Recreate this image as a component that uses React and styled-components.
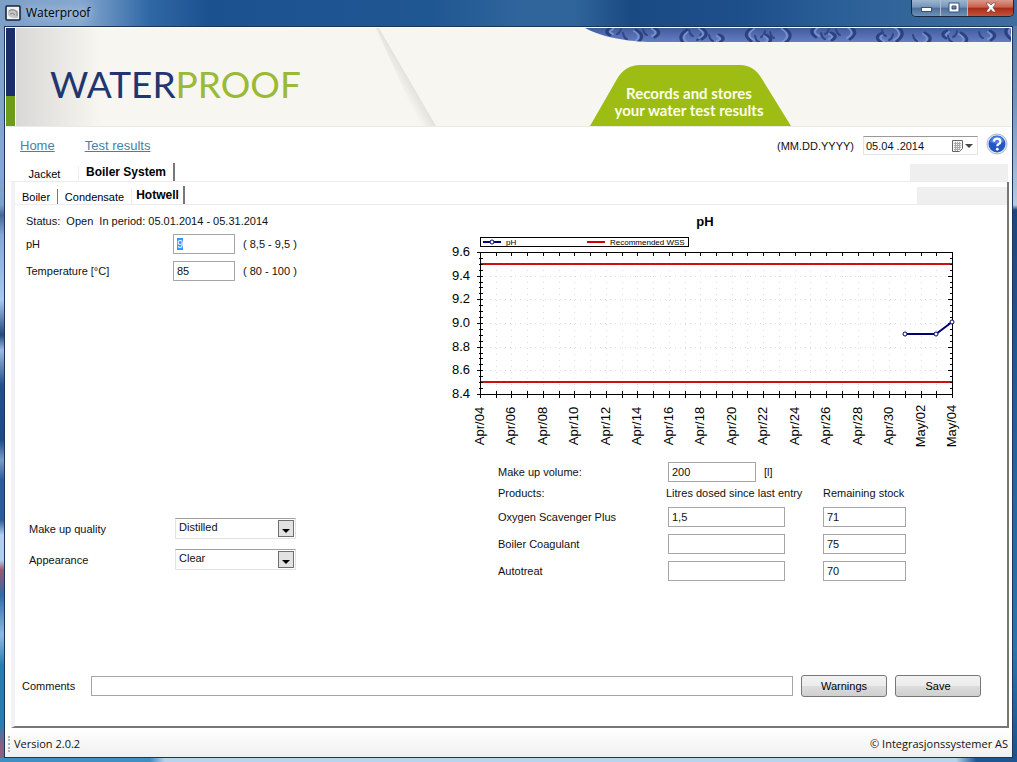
import React, { useEffect, useRef } from 'react';
import styled, { createGlobalStyle } from 'styled-components';

const DAYS = 30;
const PLOT = { left: 36, right: 508, top: 43, bottom: 185 };

const dayX = (day) => PLOT.left + Math.round((day * (PLOT.right - PLOT.left)) / DAYS);
const valueY = (value) => PLOT.bottom - Math.round(((value - 8.4) * (PLOT.bottom - PLOT.top)) / 1.2);

const days = Array.from({ length: DAYS + 1 }, (_, i) => i);
const minorTicks = Array.from({ length: 25 }, (_, i) => 8.4 + i * 0.05);
const majorTicks = [8.4, 8.6, 8.8, 9.0, 9.2, 9.4, 9.6];

const dateLabel = (day) => {
    const date = day + 4;
    return date > 30 ? `May/0${date - 30}` : `Apr/${String(date).padStart(2, '0')}`;
};

const readings = [
    { day: 27, value: 8.9 },
    { day: 29, value: 8.9 },
    { day: 30, value: 9.0 },
];

const products = [
    { name: 'Oxygen Scavenger Plus', dosed: '1,5', stock: '71' },
    { name: 'Boiler Coagulant', dosed: '', stock: '75' },
    { name: 'Autotreat', dosed: '', stock: '70' },
];

const drops = Array.from({ length: 19 }, (_, i) => ({
    x: 24 + i * 22 + ((i * 7) % 11),
    y: 3 + ((i * 5) % 9),
    r: 3 + ((i * 3) % 5),
    flip: (i * i) % 3 === 1 ? -1 : 1,
}));

const Chart = () => (
    <ChartSvg width="520" height="240" viewBox="1 0 520 240" role="img" aria-label="pH">
        <text x="261" y="17" fontSize="13" fontWeight="bold" textAnchor="middle">pH</text>

        <rect x="36.5" y="28.5" width="208" height="9" fill="#fff" stroke="#000" />
        <path d="M39 33H57" stroke="#000070" strokeWidth="2" />
        <circle cx="48" cy="33" r="2" fill="#fff" stroke="#000070" />
        <text x="62" y="36" fontSize="8">pH</text>
        <path d="M143 33H161" stroke="#d00000" strokeWidth="2" />
        <text x="166" y="36" fontSize="8">Recommended WSS</text>

        {days.slice(1, -1).map(d => (
            <path key={d} d={`M${dayX(d) + 0.5} ${PLOT.top}V${PLOT.bottom}`} stroke="#dcdcdc" strokeDasharray="1 5" />
        ))}
        {majorTicks.slice(1, -1).map(v => (
            <path key={v} d={`M${PLOT.left} ${valueY(v) + 0.5}H${PLOT.right}`} stroke="#dcdcdc" strokeDasharray="1 4" />
        ))}

        {[9.5, 8.5].map(v => (
            <path key={v} d={`M${PLOT.left} ${valueY(v)}H${PLOT.right}`} stroke="#cc1010" strokeWidth="2" />
        ))}

        <rect
            x={PLOT.left + 0.5}
            y={PLOT.top + 0.5}
            width={PLOT.right - PLOT.left}
            height={PLOT.bottom - PLOT.top}
            fill="none"
            stroke="#000"
        />
        {minorTicks.map(v => (
            <path key={v} d={`M${PLOT.left - 1} ${valueY(v) + 0.5}h4M${PLOT.right - 2} ${valueY(v) + 0.5}h3`} stroke="#000" />
        ))}
        {majorTicks.map(v => (
            <g key={v}>
                <path d={`M${PLOT.left - 3} ${valueY(v) + 0.5}h6M${PLOT.right - 4} ${valueY(v) + 0.5}h4`} stroke="#000" />
                <text x="26" y={valueY(v) + 4} fontSize="13" textAnchor="end">{v.toFixed(1)}</text>
            </g>
        ))}
        {days.map(d => (
            <path key={d} d={`M${dayX(d) + 0.5} ${PLOT.top}v4M${dayX(d) + 0.5} ${PLOT.bottom - 3}v7`} stroke="#000" />
        ))}
        {days.filter(d => d % 2 === 0).map(d => (
            <text key={d} transform={`translate(${dayX(d) + 4} 217) rotate(-90)`} fontSize="13" textAnchor="middle">
                {dateLabel(d)}
            </text>
        ))}

        <polyline
            points={readings.map(r => `${dayX(r.day)},${valueY(r.value) - 1}`).join(' ')}
            fill="none"
            stroke="#000070"
            strokeWidth="2"
        />
        {readings.map(r => (
            <circle key={r.day} cx={dayX(r.day)} cy={valueY(r.value) - 1} r="2" fill="#fff" stroke="#000070" />
        ))}
    </ChartSvg>
);

const Select = ({ id, value }) => (
    <SelectBox>
        <select id={id} defaultValue={value}>
            <option>{value}</option>
        </select>
        <svg width="16" height="17" viewBox="0 0 16 17" aria-hidden="true">
            <rect x="0.5" y="0.5" width="15" height="16" fill="#e2e2e2" stroke="#707070" />
            <path d="M4 9H12L8 13Z" fill="#000" />
        </svg>
    </SelectBox>
);

const Banner = () => (
    <BannerBox>
        <Stripe />
        <Logo>WATER<span>PROOF</span></Logo>
        <svg width="60" height="98" viewBox="0 0 60 98" aria-hidden="true">
            <defs>
                <linearGradient id="fold" gradientUnits="userSpaceOnUse" x1="21" y1="55" x2="31.5" y2="49">
                    <stop offset="0" stopColor="#f8f6f0" />
                    <stop offset="1" stopColor="#e4e2dc" />
                </linearGradient>
            </defs>
            <path d="M0 0H3L60 98H44Z" fill="url(#fold)" />
        </svg>
        <BannerRight>
            <Water viewBox="0 0 428 15" preserveAspectRatio="xMinYMin slice" aria-hidden="true">
                <defs>
                    <clipPath id="wave"><path d="M0 0H428V14H62Q22 12 0 0Z" /></clipPath>
                    <linearGradient id="sea" x1="0" y1="0" x2="0" y2="1">
                        <stop offset="0" stopColor="#425b9f" />
                        <stop offset="1" stopColor="#6681c4" />
                    </linearGradient>
                </defs>
                <g clipPath="url(#wave)">
                    <rect width="428" height="15" fill="url(#sea)" />
                    {drops.map(({ x, y, r, flip }) => (
                        <g key={x} fill="none" strokeLinecap="round" transform={`translate(${x} ${y}) scale(${flip} 1)`}>
                            <path d={`M2 ${-r}Q${-r - 3} 0 1 ${r + 1}`} stroke="#263a76" strokeWidth="3" opacity="0.85" />
                            <path d={`M4 ${-r + 1}Q${-r + 1} 1 4 ${r}`} stroke="#8199d4" strokeWidth="2" opacity="0.8" />
                            <path d={`M${r + 5} 3Q${r + 8} 2 ${r + 9} -3`} stroke="#304686" strokeWidth="2" />
                        </g>
                    ))}
                </g>
            </Water>
            <Slogan width="201" height="61" viewBox="0 0 201 61">
                <path d="M0 61L27 14Q35 0 50 0H150Q164 0 172 14L201 61Z" fill="#9dbd14" />
                <text x="99" y="34" textAnchor="middle">Records and stores</text>
                <text x="99" y="51" textAnchor="middle">your water test results</text>
            </Slogan>
        </BannerRight>
    </BannerBox>
);

const App = () => {
    const phInput = useRef(null);

    useEffect(() => {
        phInput.current.focus();
        phInput.current.select();
    }, []);

    return (
        <Desktop>
            <GlobalStyle />
            <TitleBar>
                <svg width="16" height="16" viewBox="0 0 16 16" aria-hidden="true">
                    <rect x="1" y="1" width="14" height="14" rx="1" fill="#f4f4f4" stroke="#17243c" strokeWidth="1.6" />
                    <path d="M3 6Q5 3 9 4L13 6V13H10Q5 13 3 10Z" fill="#c4c4c4" />
                    <path d="M4 6Q8 3 12 7V11M5 9Q8 7 10 10" fill="none" stroke="#858585" />
                </svg>
                <WindowTitle>Waterproof</WindowTitle>
                <WindowButtons>
                    <WindowButton aria-label="Minimize" $width={28}>
                        <svg width="12" height="12" viewBox="0 0 12 12">
                            <rect x="1.5" y="5.5" width="10" height="4" fill="#fff" stroke="#3a5377" />
                        </svg>
                    </WindowButton>
                    <WindowButton aria-label="Maximize" $width={27}>
                        <svg width="12" height="12" viewBox="0 0 12 12">
                            <path d="M1 1H11V10H1ZM4 4V7H8V4Z" fill="#fff" fillRule="evenodd" stroke="#3a5377" />
                        </svg>
                    </WindowButton>
                    <WindowButton aria-label="Close" $width={46} $close>
                        <svg width="12" height="12" viewBox="0 0 12 12">
                            <path d="M1 1H4L6 3L8 1H11L8 5.5L11 10H8L6 7.5L4 10H1L4 5.5Z" fill="#fff" stroke="#6d3030" strokeWidth="0.6" />
                        </svg>
                    </WindowButton>
                </WindowButtons>
            </TitleBar>

            <Client>
                <Banner />

                <NavRow>
                    <NavLink href="#home">Home</NavLink>
                    <NavLink href="#results">Test results</NavLink>
                    <DateLabel htmlFor="date">(MM.DD.YYYY)</DateLabel>
                    <DateBox>
                        <input id="date" defaultValue="05.04 .2014" />
                        <button type="button" aria-label="Open calendar">
                            <svg width="22" height="14" viewBox="0 0 22 14">
                                <path d="M1.5 1.5H11.5V9.5L8.5 12.5H1.5Z" fill="#f4f4f4" stroke="#666" />
                                <path d="M3 4.5H10M3 6.5H10M3 8.5H10M3 10.5H8M4.5 3V12M6.5 3V12M8.5 3V11" stroke="#aaa" />
                                <path d="M14 5H22L18 9Z" fill="#444" />
                            </svg>
                        </button>
                    </DateBox>
                    <HelpButton type="button" aria-label="Help">
                        <svg width="22" height="22" viewBox="0 0 22 22">
                            <circle cx="11" cy="11" r="10" fill="#e9eef8" stroke="#a9b6cc" />
                            <circle cx="11" cy="11" r="8.5" fill="#2457c5" />
                            <path d="M4 9Q5 3 11 3T18 9Q11 12 4 9Z" fill="#4c7ee0" />
                            <path d="M7.8 8.6Q8 5.6 11.2 5.6T14.4 8.4Q14.4 10 12.6 11Q11.3 11.8 11.3 13.2" fill="none" stroke="#fff" strokeWidth="2.2" />
                            <circle cx="11.3" cy="16.2" r="1.4" fill="#fff" />
                        </svg>
                    </HelpButton>
                </NavRow>

                <TabStrip $height={18}>
                    <Tab $width={68}>Jacket</Tab>
                    <Tab $width={96} $active>Boiler System</Tab>
                    <StripFill $width={98} />
                </TabStrip>

                <Panel>
                    <TabStrip $height={23}>
                        <Tab $width={43} $edge>Boiler</Tab>
                        <Tab $width={74}>Condensate</Tab>
                        <Tab $width={53} $active>Hotwell</Tab>
                        <StripFill $width={90} />
                    </TabStrip>

                    <Content>
                        <Left>
                            <Status>Status:&nbsp; Open&nbsp; In period: 05.01.2014 - 05.31.2014</Status>
                            <Field>
                                <label htmlFor="ph">pH</label>
                                <TextInput id="ph" ref={phInput} $width={62} defaultValue="9" />
                                <span>( 8,5 - 9,5 )</span>
                            </Field>
                            <Field>
                                <label htmlFor="temperature">Temperature [°C]</label>
                                <TextInput id="temperature" $width={62} defaultValue="85" />
                                <span>( 80 - 100 )</span>
                            </Field>
                            <Choices>
                                <label htmlFor="quality">Make up quality</label>
                                <Select id="quality" value="Distilled" />
                                <label htmlFor="appearance">Appearance</label>
                                <Select id="appearance" value="Clear" />
                            </Choices>
                        </Left>

                        <Right>
                            <Chart />
                            <Volume>
                                <label htmlFor="volume">Make up volume:</label>
                                <TextInput id="volume" $width={88} defaultValue="200" />
                                <span>[l]</span>
                            </Volume>
                            <ProductTable>
                                <thead>
                                    <tr>
                                        <th>Products:</th>
                                        <th>Litres dosed since last entry</th>
                                        <th>Remaining stock</th>
                                    </tr>
                                </thead>
                                <tbody>
                                    {products.map(({ name, dosed, stock }) => (
                                        <tr key={name}>
                                            <td>{name}</td>
                                            <td><TextInput $width={117} defaultValue={dosed} aria-label={`${name}, litres dosed`} /></td>
                                            <td><TextInput $width={83} defaultValue={stock} aria-label={`${name}, remaining stock`} /></td>
                                        </tr>
                                    ))}
                                </tbody>
                            </ProductTable>
                        </Right>
                    </Content>

                    <Footer>
                        <label htmlFor="comments">Comments</label>
                        <CommentInput id="comments" />
                        <Button type="button">Warnings</Button>
                        <Button type="button">Save</Button>
                    </Footer>
                </Panel>

                <StatusBar>
                    <Grip />
                    <span>Version 2.0.2</span>
                    <Copyright>© Integrasjonssystemer AS</Copyright>
                </StatusBar>
            </Client>
        </Desktop>
    );
};

export default App;

const GlobalStyle = createGlobalStyle`
* {
    box-sizing: border-box;
}
body {
    margin: 0;
    font-family: "Liberation Sans", Arial, sans-serif;
    font-size: 11px;
    line-height: 14px;
    color: #111;
}
input, select, button {
    font: inherit;
    color: inherit;
}
`

const Desktop = styled.div`
display: flex;
flex-direction: column;
min-height: 100vh;
padding: 0 4px 4px;
background:
    linear-gradient(90deg, #3f8fbf 0, #3f8fbf 150px, #b9d2ef 165px, #b9d2ef 94%, #1d5590 96%) bottom / 100% 4px no-repeat,
    linear-gradient(#7f9fc6 0, #86a8d0 170px, #7ba0cb 205px, #45688f 215px, #86a9d2 235px, #a9c9ec 300px, #24487f 335px, #9db9de 350px, #23508c 385px, #1d4a88 440px, #7a9bc8 460px, #2a5c9b 480px, #2a5c9b 520px, #b4cfea 535px, #b4cfea 560px, #a0566c 570px, #2f6ba8 595px, #8db9e4 635px, #2a7cb0 665px, #2a7cb0 725px, #8c5f7c 745px) left / 5px 100% no-repeat,
    linear-gradient(#50749e 0, #6f94be 100px, #b9cade 205px, #1c467f 210px, #2760a0 450px, #2f72b0 650px, #1d5490 750px) right / 4px 100% no-repeat,
    #1d5490;
`

const TitleBar = styled.header`
display: flex;
align-items: center;
height: 26px;
margin: 0 -4px;
padding: 0 3px 0 5px;
background: linear-gradient(90deg, #7c9fc8 0, #86a8d0 80px, #2f67a4 150px, #1c5190 210px, #1f5792 430px, #30659c 520px, #2f659b 575px, #1a4a82 630px, #1d4f8b 740px, #2c6198 850px, #3f6d9e 100%);
`

const WindowTitle = styled.span`
flex: 1;
margin-left: 5px;
font-family: "Open Sans", sans-serif;
font-size: 12px;
color: #000;
text-shadow: 0 0 8px #dbe8f6;
`

const WindowButtons = styled.div`
display: flex;
align-self: flex-start;
height: 17px;
border: 1px solid #16283f;
border-top: 0;
border-radius: 0 0 5px 5px;
overflow: hidden;
`

const WindowButton = styled.button`
display: flex;
align-items: center;
justify-content: center;
width: ${p => p.$width}px;
padding: 0;
border: 0;
border-left: ${p => (p.$width === 28 ? '0' : '1px solid #a9bed6')};
background: ${p => p.$close
        ? 'linear-gradient(#d99a8d 0, #c9604c 45%, #a92c15 50%, #c4513c 100%)'
        : 'linear-gradient(#9db6d0 0, #7595b8 45%, #496f99 50%, #6e92b8 100%)'};
`

const Client = styled.main`
flex: 1;
display: flex;
flex-direction: column;
border: 1px solid #1b3459;
background: #fff;
`

const BannerBox = styled.div`
display: flex;
height: 99px;
margin: 1px 1px 0;
background: linear-gradient(90deg, #d9d8d6 10px, #f8f6f0 95px);
border-bottom: 1px solid #eceae6;
`

const Stripe = styled.div`
width: 10px;
border-right: 1px solid #fff;
background: linear-gradient(#1c2d6b 69%, #6d9c1c 69%);
`

const Logo = styled.h1`
width: 360px;
margin: 0;
padding: 36px 0 0 34px;
font-family: Lato, sans-serif;
font-size: 37px;
font-weight: 400;
line-height: 40px;
color: #23356f;
span {
    color: #9aba36;
}
`

const BannerRight = styled.div`
flex: 1;
display: flex;
flex-direction: column;
margin-left: 149px;
`

const Water = styled.svg`
display: block;
width: 100%;
height: 15px;
`

const Slogan = styled.svg`
margin: 22px 0 0 5px;
font-family: Lato, sans-serif;
font-size: 15px;
font-weight: 700;
text {
    fill: #fbfde8;
}
`

const NavRow = styled.nav`
display: flex;
align-items: center;
height: 37px;
padding: 0 4px 0 15px;
`

const NavLink = styled.a`
margin-right: 30px;
font-size: 13px;
line-height: 16px;
color: #3f82ab;
`

const DateLabel = styled.label`
margin-left: auto;
margin-right: 9px;
`

const DateBox = styled.div`
display: flex;
width: 115px;
height: 19px;
border: 1px solid #e4e4e4;
border-top-color: #999;
input {
    flex: 1;
    min-width: 0;
    padding: 0 2px;
    border: 0;
    outline: 0;
}
button {
    display: flex;
    align-items: center;
    padding: 0 4px;
    border: 0;
    background: none;
}
`

const HelpButton = styled.button`
display: flex;
align-self: flex-start;
margin: 6px 0 0 8px;
padding: 0;
border: 0;
background: none;
`

const TabStrip = styled.div`
display: flex;
align-items: flex-end;
height: ${p => p.$height}px;
margin: 0 4px 0 6px;
border-bottom: 1px solid #ececec;
`

const Tab = styled.button`
width: ${p => p.$width}px;
height: ${p => (p.$active ? 18 : 15)}px;
padding: 0;
border: 0;
border-right: ${p => (p.$active ? '2px solid #777' : p.$edge ? '1px solid #777' : '1px solid #eee')};
background: #fff;
font-size: ${p => (p.$active ? 12 : 11)}px;
font-weight: ${p => (p.$active ? 'bold' : 'normal')};
white-space: nowrap;
color: #000;
`

const StripFill = styled.div`
width: ${p => p.$width}px;
height: 17px;
margin-left: auto;
background: #efefef;
`

const Panel = styled.section`
flex: 1;
display: flex;
flex-direction: column;
margin: 0 3px 0 6px;
border-left: 4px solid #f0f2f5;
border-right: 2px solid #777;
border-bottom: 2px solid #777;
> ${TabStrip} {
    margin: 0;
}
`

const Content = styled.div`
flex: 1;
display: grid;
grid-template-columns: 430px 1fr;
`

const Left = styled.div`
display: flex;
flex-direction: column;
padding-left: 11px;
`

const Status = styled.p`
margin: 9px 0 2px;
`

const Field = styled.div`
display: flex;
align-items: center;
height: 27px;
label {
    width: 147px;
}
span {
    margin-left: 8px;
}
`

const TextInput = styled.input`
display: block;
width: ${p => p.$width}px;
height: 20px;
padding: 0 3px;
border: 1px solid #a6a6a6;
outline: 0;
background: #fff;
&::selection {
    background: #3399ff;
    color: #fff;
}
`

const Choices = styled.div`
display: grid;
grid-template-columns: 146px 121px;
grid-auto-rows: 21px;
row-gap: 10px;
align-items: center;
margin: 234px 0 0 3px;
`

const SelectBox = styled.div`
display: grid;
grid-template-columns: 1fr 17px;
align-items: center;
height: 21px;
border: 1px solid #e2e2e2;
border-top-color: #a0a0a0;
select {
    grid-area: 1 / 1 / 2 / 3;
    height: 19px;
    padding: 0 3px 3px;
    border: 0;
    outline: 0;
    background: #fff;
    appearance: none;
}
svg {
    grid-area: 1 / 2;
    pointer-events: none;
}
`

const Right = styled.div`
padding-top: 4px;
`

const ChartSvg = styled.svg`
display: block;
`

const Volume = styled.div`
display: flex;
align-items: center;
margin: 13px 0 0 53px;
label {
    width: 170px;
}
span {
    margin-left: 8px;
}
`

const ProductTable = styled.table`
margin-left: 53px;
border-spacing: 0;
th, td {
    height: 27px;
    padding: 0;
    text-align: left;
    font-weight: normal;
}
th {
    height: 21px;
    white-space: nowrap;
}
th:nth-child(1) {
    width: 168px;
}
th:nth-child(2) {
    width: 157px;
}
td:nth-child(2) {
    padding-left: 2px;
}
`

const Footer = styled.div`
display: flex;
align-items: center;
gap: 8px;
padding: 0 26px 29px 7px;
label {
    width: 61px;
}
`

const CommentInput = styled(TextInput)`
flex: 1;
min-width: 0;
`

const Button = styled.button`
width: 86px;
height: 22px;
padding: 0;
border: 1px solid #777;
border-radius: 3px;
background: linear-gradient(#f2f2f2 0, #ebebeb 50%, #dddddd 50%, #cfcfcf 100%);
color: #000;
`

const StatusBar = styled.footer`
display: flex;
align-items: center;
height: 26px;
margin-top: 3px;
padding: 0 4px 0 3px;
background: linear-gradient(#fdfdfd, #f0f0f0);
font-family: "Open Sans", sans-serif;
`

const Grip = styled.div`
height: 16px;
margin-right: 4px;
border-left: 2px dotted #b4b4b4;
`

const Copyright = styled.span`
margin-left: auto;
`
